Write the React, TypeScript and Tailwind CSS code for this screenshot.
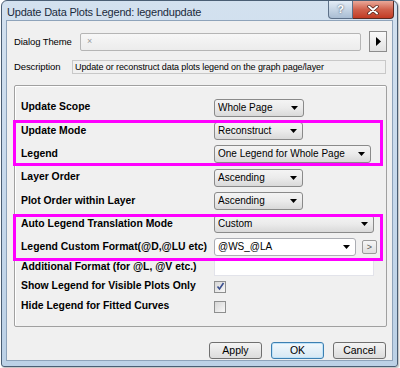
import React from "react";

const FONT = "font-['Liberation_Sans',Arial,sans-serif]";

function Arrow() {
  return (
    <svg width="7" height="4" viewBox="0 0 7 4" className="shrink-0">
      <path d="M0 0h7L3.5 4z" fill="#000" />
    </svg>
  );
}

function Combo({ width, value, editable }: { width: string; value: string; editable?: boolean }) {
  return (
    <div
      className={`${width} flex h-[18px] items-center rounded-[3px] border pl-[3px] pr-[5px] ${
        editable
          ? "border-[#abadb3] bg-white"
          : "border-[#8a8a8a] bg-gradient-to-b from-[#f4f4f4] via-[#ebebeb] to-[#d9d9d9]"
      }`}
    >
      <span className="flex-1 truncate whitespace-nowrap text-[10px] leading-none text-black">{value}</span>
      <Arrow />
    </div>
  );
}

function Check({ checked }: { checked?: boolean }) {
  return (
    <div className="flex h-[12px] w-[12px] items-center justify-center border border-[#8e8f8f] bg-gradient-to-br from-[#d6d6d6] to-[#f8f8f8]">
      {checked && (
        <svg width="9" height="9" viewBox="0 0 9 9">
          <path d="M1.5 4.5l2 2.5L7.5 1" fill="none" stroke="#3a4f8f" strokeWidth="1.6" />
        </svg>
      )}
    </div>
  );
}

function Row({ label, h, children }: { label: string; h: string; children?: React.ReactNode }) {
  return (
    <div className={`flex items-center ${h}`}>
      <span className="w-[193px] shrink-0 whitespace-nowrap text-[10.4px] font-bold leading-none text-black">
        {label}
      </span>
      {children}
    </div>
  );
}

function Btn({ label, focused }: { label: string; focused?: boolean }) {
  return (
    <div
      className={`flex h-[17px] w-[53px] items-center justify-center rounded-[3px] border text-[10.5px] text-black ${
        focused
          ? "border-[#3c7fb1] bg-gradient-to-b from-[#f2f8fc] to-[#d6e8f4] shadow-[inset_0_0_0_1px_#bfe2f8]"
          : "border-[#707070] bg-gradient-to-b from-[#f4f4f4] to-[#dcdcdc]"
      }`}
    >
      {label}
    </div>
  );
}

export default function App() {
  return (
    <div className={`h-[368px] w-[400px] overflow-hidden bg-white pl-px ${FONT}`}>
      <div className="flex h-[367px] w-[397px] flex-col rounded-t-[6px] rounded-b-[3px] border border-[#4a5e74] bg-gradient-to-b from-[#d3e1ef] via-[#c7d9ec] to-[#bcd1e6] shadow-[1px_1px_2px_rgba(0,0,0,0.3)]">
        {/* title bar */}
        <div className="flex h-[19px] items-start">
          <span className="whitespace-nowrap pl-[5px] pt-[6px] text-[11px] leading-none tracking-[-0.2px] text-[#1b2a3c]">
            Update Data Plots Legend: legendupdate
          </span>
          <div className="ml-auto mr-[3px] flex">
            <div className="flex h-[18px] w-[25px] items-center justify-center rounded-bl-[4px] border border-t-0 border-[#5d7088] bg-gradient-to-b from-[#e4edf6] to-[#a9bdd3] text-[11px] font-bold text-white [text-shadow:0_0_2px_#2b3c50]">
              ?
            </div>
            <div className="flex h-[18px] w-[41px] items-center justify-center rounded-br-[4px] border border-l-0 border-t-0 border-[#5a2a22] bg-gradient-to-b from-[#e9a899] via-[#d0614c] to-[#c23a23]">
              <svg width="12" height="10" viewBox="0 0 12 10">
                <path d="M2 1.5l8 7M10 1.5l-8 7" stroke="#4a1d16" strokeWidth="3.4" strokeLinecap="round" />
                <path d="M2 1.5l8 7M10 1.5l-8 7" stroke="#fff" strokeWidth="2" strokeLinecap="round" />
              </svg>
            </div>
          </div>
        </div>

        {/* client area */}
        <div className="mx-[4px] flex h-[341px] flex-col border border-[#8ea3ba] bg-[#f0f0f0]">
          <div className="mt-[10px] flex h-[21px] items-center pl-[7px] pr-[5px]">
            <span className="w-[66px] shrink-0 whitespace-nowrap text-[9.5px] leading-none tracking-[-0.1px] text-black">
              Dialog Theme
            </span>
            <div className="flex h-[18px] w-[281px] items-center rounded-[2px] border border-[#b5b5b5] bg-gradient-to-b from-[#f7f7f7] to-[#ececec] pl-[6px]">
              <span className="text-[9px] leading-none text-[#9a9a9a]">×</span>
            </div>
            <div className="ml-auto flex h-[21px] w-[18px] items-center justify-center border border-[#8c8c8c] bg-gradient-to-b from-[#fafafa] to-[#e2e2e2]">
              <svg width="5" height="9" viewBox="0 0 5 9">
                <path d="M0 0l5 4.5L0 9z" fill="#000" />
              </svg>
            </div>
          </div>

          <div className="mt-[8px] flex h-[14px] items-center pl-[7px] pr-[6px]">
            <span className="w-[58px] shrink-0 whitespace-nowrap text-[9.5px] leading-none tracking-[-0.1px] text-black">
              Description
            </span>
            <div className="flex h-[14px] flex-1 items-center border border-[#c8c8c8] bg-[#f0f0f0] pl-[2px]">
              <span className="whitespace-nowrap text-[9px] leading-none tracking-[-0.1px] text-black">
                Update or reconstruct data plots legend on the graph page/layer
              </span>
            </div>
          </div>

          {/* group box */}
          <div className="ml-[7px] mr-[5px] mt-[11px] h-[242px] rounded-[2px] border border-[#a0a0a0] pl-[6px] pt-[10px] shadow-[inset_1px_1px_0_#fff]">
            <Row label="Update Scope" h="h-[23.3px]">
              <Combo width="w-[90px]" value="Whole Page" />
            </Row>
            <div className="relative">
              <Row label="Update Mode" h="h-[23.3px]">
                <Combo width="w-[89px]" value="Reconstruct" />
              </Row>
              <Row label="Legend" h="h-[23.3px]">
                <Combo width="w-[157px]" value="One Legend for Whole Page" />
              </Row>
              <span className="pointer-events-none absolute -left-[8px] right-[3px] top-[1px] bottom-0 border-[3px] border-[#ff00ff]" />
            </div>
            <Row label="Layer Order" h="h-[23.3px]">
              <Combo width="w-[89px]" value="Ascending" />
            </Row>
            <Row label="Plot Order within Layer" h="h-[23.3px]">
              <Combo width="w-[89px]" value="Ascending" />
            </Row>
            <div className="relative">
              <Row label="Auto Legend Translation Mode" h="h-[23.3px]">
                <Combo width="w-[160px]" value="Custom" />
              </Row>
              <Row label="Legend Custom Format(@D,@LU etc)" h="h-[23.3px]">
                <Combo width="w-[142px]" value="@WS_@LA" editable />
                <div className="ml-[6px] flex h-[14px] w-[15px] items-center justify-center rounded-[2px] border border-[#9a9a9a] bg-gradient-to-b from-[#f6f6f6] to-[#dedede] text-[9px] leading-none text-[#555]">
                  &gt;
                </div>
              </Row>
              <span className="pointer-events-none absolute -left-[8px] right-[3px] top-[2px] -bottom-[2px] border-[3px] border-[#ff00ff]" />
            </div>
            <Row label="Additional Format (for @L, @V etc.)" h="h-[17px]">
              <div className="h-[16px] w-[160px] border border-[#e2e3ea] bg-white" />
            </Row>
            <Row label="Show Legend for Visible Plots Only" h="h-[21px]">
              <Check checked />
            </Row>
            <Row label="Hide Legend for Fitted Curves" h="h-[19px]">
              <Check />
            </Row>
          </div>

          <div className="mt-[15px] flex justify-end gap-[9px] pr-[6px]">
            <Btn label="Apply" />
            <Btn label="OK" focused />
            <Btn label="Cancel" />
          </div>
        </div>
      </div>
    </div>
  );
}
